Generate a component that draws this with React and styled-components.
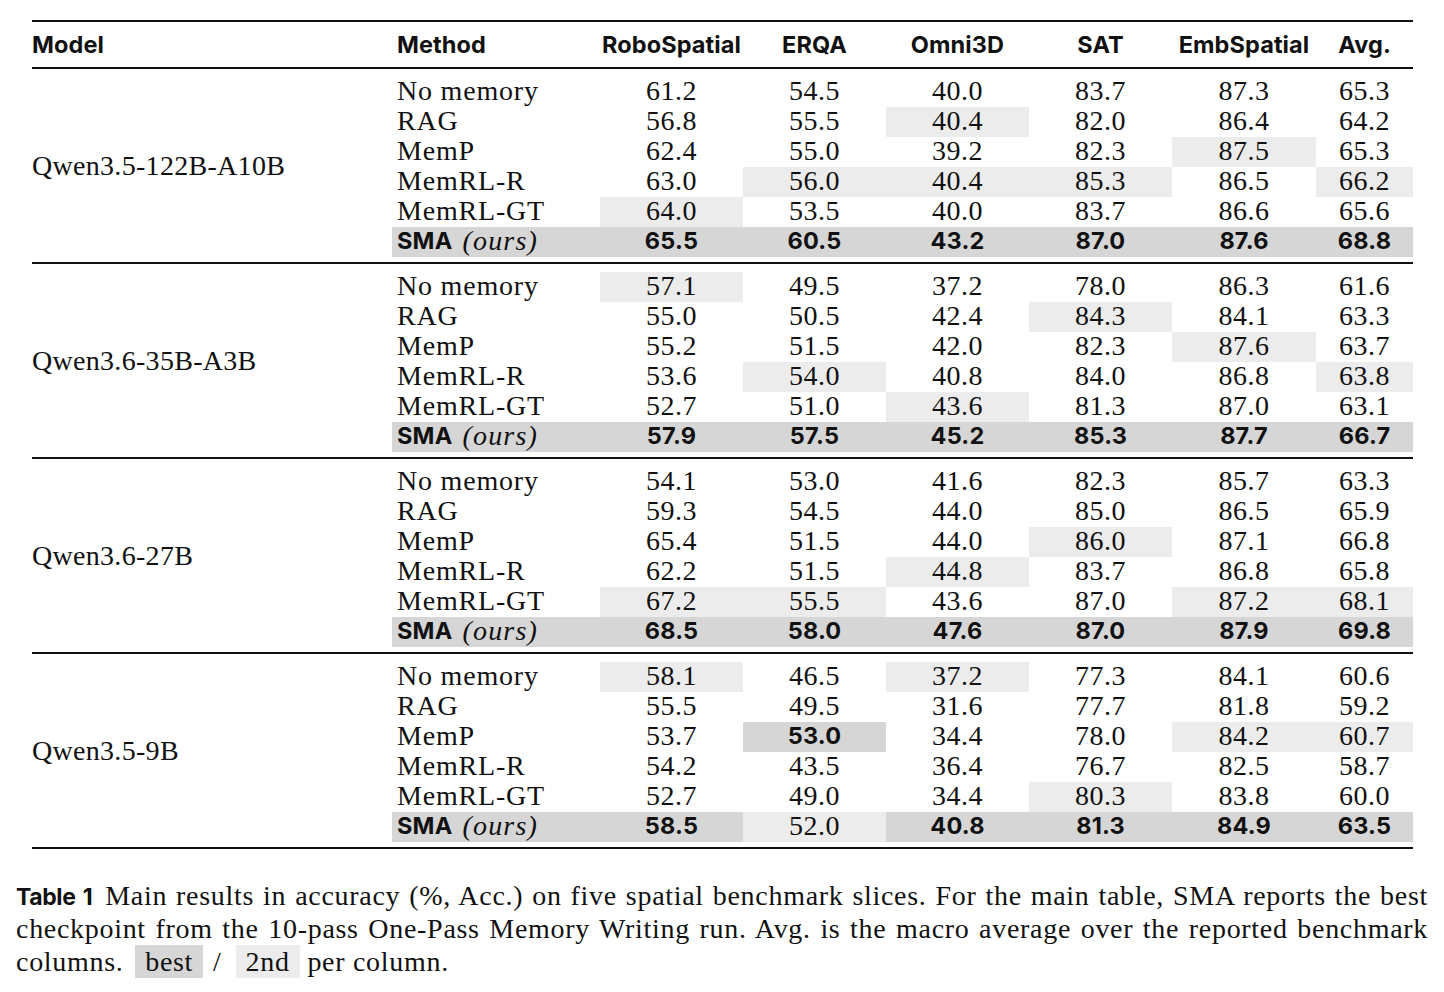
import styled, { createGlobalStyle } from "styled-components";

const GlobalStyle = createGlobalStyle`
	body {
		margin: 0;
		background: #fff;
		color: #111;
	}
`;

const BEST = "#d6d6d6";
const SECOND = "#ececec";
const SERIF = `"Liberation Serif", "Times New Roman", serif`;
const SANS = `Inter, "Liberation Sans", Arial, sans-serif`;
const COLUMNS = "360px 208px 143px 143px 143px 143px 144px 97px";

// "*" = best in column, "+" = second best
const groups = [
	{
		model: "Qwen3.5-122B-A10B",
		rows: [
			["No memory", "61.2", "54.5", "40.0", "83.7", "87.3", "65.3"],
			["RAG", "56.8", "55.5", "40.4+", "82.0", "86.4", "64.2"],
			["MemP", "62.4", "55.0", "39.2", "82.3", "87.5+", "65.3"],
			["MemRL-R", "63.0", "56.0+", "40.4+", "85.3+", "86.5", "66.2+"],
			["MemRL-GT", "64.0+", "53.5", "40.0", "83.7", "86.6", "65.6"],
			["SMA", "65.5*", "60.5*", "43.2*", "87.0*", "87.6*", "68.8*"],
		],
	},
	{
		model: "Qwen3.6-35B-A3B",
		rows: [
			["No memory", "57.1+", "49.5", "37.2", "78.0", "86.3", "61.6"],
			["RAG", "55.0", "50.5", "42.4", "84.3+", "84.1", "63.3"],
			["MemP", "55.2", "51.5", "42.0", "82.3", "87.6+", "63.7"],
			["MemRL-R", "53.6", "54.0+", "40.8", "84.0", "86.8", "63.8+"],
			["MemRL-GT", "52.7", "51.0", "43.6+", "81.3", "87.0", "63.1"],
			["SMA", "57.9*", "57.5*", "45.2*", "85.3*", "87.7*", "66.7*"],
		],
	},
	{
		model: "Qwen3.6-27B",
		rows: [
			["No memory", "54.1", "53.0", "41.6", "82.3", "85.7", "63.3"],
			["RAG", "59.3", "54.5", "44.0", "85.0", "86.5", "65.9"],
			["MemP", "65.4", "51.5", "44.0", "86.0+", "87.1", "66.8"],
			["MemRL-R", "62.2", "51.5", "44.8+", "83.7", "86.8", "65.8"],
			["MemRL-GT", "67.2+", "55.5+", "43.6", "87.0", "87.2+", "68.1+"],
			["SMA", "68.5*", "58.0*", "47.6*", "87.0*", "87.9*", "69.8*"],
		],
	},
	{
		model: "Qwen3.5-9B",
		rows: [
			["No memory", "58.1+", "46.5", "37.2+", "77.3", "84.1", "60.6"],
			["RAG", "55.5", "49.5", "31.6", "77.7", "81.8", "59.2"],
			["MemP", "53.7", "53.0*", "34.4", "78.0", "84.2+", "60.7+"],
			["MemRL-R", "54.2", "43.5", "36.4", "76.7", "82.5", "58.7"],
			["MemRL-GT", "52.7", "49.0", "34.4", "80.3+", "83.8", "60.0"],
			["SMA", "58.5*", "52.0+", "40.8*", "81.3*", "84.9*", "63.5*"],
		],
	},
];

const headers = ["RoboSpatial", "ERQA", "Omni3D", "SAT", "EmbSpatial", "Avg."];

const rank = (v) => (v.endsWith("*") ? "best" : v.endsWith("+") ? "second" : "none");

export default function App() {
	return (
		<Page>
			<GlobalStyle />
			<Table>
				<HeaderRow>
					<HeadCell>Model</HeadCell>
					<HeadCell $indent>Method</HeadCell>
					{headers.map((h) => (
						<HeadCell key={h} $center>
							{h}
						</HeadCell>
					))}
				</HeaderRow>
				{groups.map((g) => (
					<Group key={g.model}>
						<ModelCell>{g.model}</ModelCell>
						{g.rows.map(([method, ...vals]) => (
							<Row key={method}>
								{method === "SMA" ? (
									<MethodCell $ours>
										<BoldText>SMA</BoldText>
										<Ours>(ours)</Ours>
									</MethodCell>
								) : (
									<MethodCell>{method}</MethodCell>
								)}
								{vals.map((v, i) => {
									const r = rank(v);
									const text = v.replace(/[*+]/, "");
									return (
										<ValueCell key={i} $rank={r}>
											{r === "best" ? <BoldText>{text}</BoldText> : text}
										</ValueCell>
									);
								})}
							</Row>
						))}
					</Group>
				))}
			</Table>
			<Caption>
				<CaptionLine $full>
					<TableLabel>Table 1</TableLabel> Main results in accuracy (%, Acc.) on five spatial
					benchmark slices. For the main table, SMA reports the best
				</CaptionLine>
				<CaptionLine $full>
					checkpoint from the 10-pass One-Pass Memory Writing run. Avg. is the macro average over
					the reported benchmark
				</CaptionLine>
				<CaptionLine>
					columns. <Swatch $rank="best">best</Swatch>
					<Slash>/</Slash>
					<Swatch $rank="second">2nd</Swatch> per column.
				</CaptionLine>
			</Caption>
		</Page>
	);
}

const Page = styled.div`
	padding-top: 20px;
	width: 1444px;
	font-family: ${SERIF};
`;

const Table = styled.div`
	margin-left: 32px;
	width: 1381px;
	border-top: 2px solid #111;
	border-bottom: 2px solid #111;
`;

const HeaderRow = styled.div`
	display: grid;
	grid-template-columns: ${COLUMNS};
	height: 45px;
	border-bottom: 2px solid #111;
`;

const HeadCell = styled.div`
	display: flex;
	align-items: center;
	justify-content: ${(p) => (p.$center ? "center" : "flex-start")};
	padding-left: ${(p) => (p.$indent ? "5px" : "0")};
	font-family: ${SANS};
	font-weight: 700;
	font-size: 23.5px;
	letter-spacing: 0.1px;
`;

const Group = styled.div`
	display: grid;
	grid-template-columns: ${COLUMNS};
	grid-auto-rows: 30px;
	padding: 8px 0 5px;
	& + & {
		border-top: 2px solid #111;
	}
`;

const ModelCell = styled.div`
	grid-column: 1;
	grid-row: 1 / span 6;
	align-self: center;
	padding-bottom: 3px;
	font-size: 28px;
	letter-spacing: 0.3px;
`;

const Row = styled.div`
	display: contents;
`;

const cellBg = (r) => (r === "best" ? BEST : r === "second" ? SECOND : "transparent");

const MethodCell = styled.div`
	grid-column: 2;
	display: flex;
	align-items: center;
	gap: 10px;
	padding: 0 0 3px 5px;
	font-size: 28px;
	letter-spacing: 0.8px;
	background: ${(p) => (p.$ours ? BEST : "transparent")};
`;

const ValueCell = styled.div`
	display: flex;
	align-items: center;
	justify-content: center;
	padding-bottom: 3px;
	font-size: 28px;
	letter-spacing: 0.5px;
	background: ${(p) => cellBg(p.$rank)};
`;

const BoldText = styled.span`
	font-family: ${SANS};
	font-weight: 700;
	font-size: 23.5px;
	letter-spacing: 0.2px;
`;

const Ours = styled.span`
	font-style: italic;
	letter-spacing: 1.2px;
`;

const Caption = styled.div`
	margin: 30px 0 0 16px;
	width: 1412px;
	font-size: 28px;
	line-height: 33px;
	letter-spacing: 0.7px;
`;

const CaptionLine = styled.div`
	height: 33px;
	text-align: justify;
	text-align-last: ${(p) => (p.$full ? "justify" : "left")};
	white-space: nowrap;
`;

const TableLabel = styled.span`
	font-family: ${SANS};
	font-weight: 700;
	font-size: 23px;
	line-height: 0;
	letter-spacing: -0.4px;
	word-spacing: 1px;
	margin-right: 4px;
`;

const Swatch = styled.span`
	display: inline-block;
	vertical-align: top;
	background: ${(p) => cellBg(p.$rank)};
	padding: 0 10px;
	margin-left: 4px;
	line-height: 33px;
`;

const Slash = styled.span`
	margin: 0 10px;
`;
